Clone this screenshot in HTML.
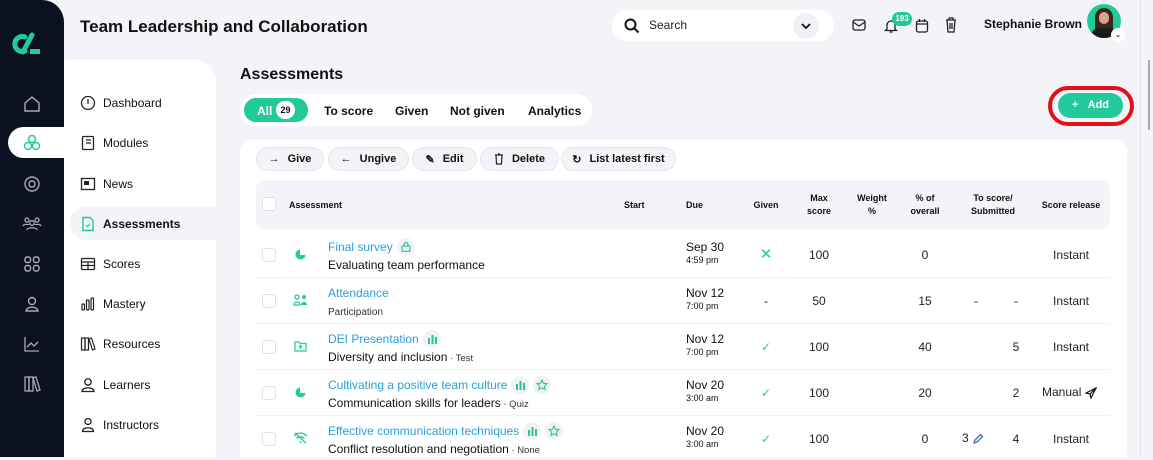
<!DOCTYPE html>
<html><head><meta charset="utf-8">
<style>
*{box-sizing:border-box;margin:0;padding:0}
body{width:1153px;height:457px;overflow:hidden;background:#f3f4f8;font-family:"Liberation Sans",sans-serif;color:#111;position:relative}
.a{position:absolute}
.side{left:0;top:0;width:64px;height:457px;background:#0b1120;border-top-right-radius:22px}
.sico{position:absolute;left:22px;width:20px;height:20px}
.nav{left:64px;top:60px;width:152px;height:397px;background:#fff;border-top-right-radius:22px}
.ni{position:absolute;left:16px;font-size:12px;font-weight:500;color:#111;display:flex;align-items:center;gap:7px;height:20px}
.ni svg{width:16px;height:16px}
.tabs{left:240px;top:94px;width:352px;height:32px;background:#fff;border-radius:16px}
.tab{position:absolute;top:10px;font-size:12px;font-weight:bold}
.panel{left:240px;top:140px;width:887px;height:317px;background:#fff;border-top-left-radius:12px;border-top-right-radius:12px}
.btn{position:absolute;top:147px;height:24px;border:1px solid #e3e5ec;background:#f3f4f8;border-radius:12px;font-size:11px;font-weight:bold;display:flex;align-items:center;justify-content:center;gap:8px}
.thead{left:256px;top:180px;width:854px;height:49px;background:#f3f4f8;border-radius:8px}
.th{position:absolute;font-size:9px;font-weight:bold;text-align:center;line-height:13px}
.cb{position:absolute;left:262px;width:14px;height:14px;border:1px solid #e0e2e8;border-radius:3px;background:#fff}
.row{position:absolute;left:256px;width:854px;height:1px;background:#eef0f4}
.t{position:absolute;font-size:12px;color:#222}
.tc{position:absolute;font-size:12px;color:#222;text-align:center;width:60px}
.lnk{color:#2a9fdd;font-size:12px}
.sub{font-size:12px;color:#111}
.sm{font-size:9.5px;color:#333}
.due{position:absolute;left:686px;font-size:12px;line-height:13px}
.due small{font-size:9px;display:block}
.pill{display:inline-block;width:18px;height:18px;border-radius:9px;background:#f0f2f5;vertical-align:middle;margin-left:4px;position:relative}
</style></head><body>
<div class="a side">
  <svg class="a" style="left:12px;top:32px" width="30" height="24" viewBox="0 0 30 24"><path d="M13 5 A7.5 7.5 0 1 0 13 19" stroke="#22c99a" stroke-width="5" fill="none" stroke-linecap="round"/><path d="M20 3 L11 20" stroke="#22c99a" stroke-width="5" stroke-linecap="round"/><rect x="18" y="17" width="10" height="5" fill="#22c99a"/></svg>
  <svg class="sico" style="top:94px" viewBox="0 0 20 20"><path d="M3 9 L10 3 L17 9 V17 H3Z" fill="none" stroke="#aab" stroke-width="1.4"/></svg>
  <div class="a" style="left:8px;top:127px;width:56px;height:31px;background:#fff;border-radius:16px 0 0 16px"></div>
  <svg class="sico" style="top:133px" viewBox="0 0 20 20"><g fill="none" stroke="#22c99a" stroke-width="1.4"><circle cx="10" cy="6" r="3.5"/><circle cx="6" cy="13" r="3.5"/><circle cx="14" cy="13" r="3.5"/></g></svg>
  <svg class="sico" style="top:174px" viewBox="0 0 20 20"><circle cx="10" cy="10" r="7" fill="none" stroke="#aab" stroke-width="1.4"/><circle cx="10" cy="10" r="3" fill="none" stroke="#aab" stroke-width="1.4"/></svg>
  <svg class="sico" style="top:214px" viewBox="0 0 20 20"><g fill="none" stroke="#aab" stroke-width="1.3"><circle cx="5" cy="6" r="2"/><circle cx="15" cy="6" r="2"/><circle cx="10" cy="9" r="2.3"/><path d="M5 16c0-3 10-3 10 0M1 12c0-2 6-2 6-1M19 12c0-2-6-2-6-1"/></g></svg>
  <svg class="sico" style="top:254px" viewBox="0 0 20 20"><g fill="none" stroke="#aab" stroke-width="1.4"><rect x="3" y="3" width="5.5" height="5.5" rx="2"/><rect x="11.5" y="3" width="5.5" height="5.5" rx="2"/><rect x="3" y="11.5" width="5.5" height="5.5" rx="2"/><rect x="11.5" y="11.5" width="5.5" height="5.5" rx="2"/></g></svg>
  <svg class="sico" style="top:294px" viewBox="0 0 20 20"><g fill="none" stroke="#aab" stroke-width="1.4"><circle cx="10" cy="7" r="3.5"/><path d="M4 17c0-5 12-5 12 0Z"/></g></svg>
  <svg class="sico" style="top:334px" viewBox="0 0 20 20"><path d="M3 3V17H17M5 13l4-4 3 3 4-4" fill="none" stroke="#aab" stroke-width="1.3"/></svg>
  <svg class="sico" style="top:374px" viewBox="0 0 20 20"><g fill="none" stroke="#aab" stroke-width="1.3"><rect x="3" y="3" width="4" height="14"/><rect x="7" y="3" width="4" height="14"/><path d="M11 4l3-1 4 13-3 1z"/></g></svg>
</div>
<div class="a" style="left:80px;top:17px;font-size:17px;font-weight:bold">Team Leadership and Collaboration</div>
<div class="a" style="left:612px;top:10px;width:222px;height:31px;background:#fff;border-radius:16px"></div>
<svg class="a" style="left:624px;top:18px" width="16" height="16" viewBox="0 0 16 16"><circle cx="6.5" cy="6.5" r="5" fill="none" stroke="#111" stroke-width="2"/><path d="M10 10l4.5 4.5" stroke="#111" stroke-width="2"/></svg>
<div class="a" style="left:649px;top:18px;font-size:12px;color:#222">Search</div>
<div class="a" style="left:793px;top:13px;width:26px;height:26px;border-radius:13px;background:#f0f1f5"></div>
<svg class="a" style="left:800px;top:20px" width="12" height="12" viewBox="0 0 12 12"><path d="M2 4l4 4 4-4" fill="none" stroke="#111" stroke-width="1.8"/></svg>
<svg class="a" style="left:852px;top:19px" width="14" height="12" viewBox="0 0 14 12"><rect x="1" y="1" width="12" height="10" rx="2" fill="none" stroke="#222" stroke-width="1.3"/><path d="M1 3l6 4 6-4" fill="none" stroke="#222" stroke-width="1.3"/></svg>
<svg class="a" style="left:884px;top:18px" width="14" height="16" viewBox="0 0 14 16"><path d="M3 11V7a4 4 0 018 0v4l1.5 1.5h-11zM5.5 14h3" fill="none" stroke="#222" stroke-width="1.3"/></svg>
<div class="a" style="left:892px;top:12px;width:20px;height:14px;border-radius:7px;background:#22c99a;color:#fff;font-size:8px;font-weight:bold;text-align:center;line-height:14px">193</div>
<svg class="a" style="left:915px;top:18px" width="14" height="15" viewBox="0 0 14 15"><rect x="1.5" y="3" width="11" height="11" rx="2" fill="none" stroke="#222" stroke-width="1.3"/><path d="M1.5 6h11M4.5 1v3M9.5 1v3" stroke="#222" stroke-width="1.3"/></svg>
<svg class="a" style="left:945px;top:17px" width="12" height="16" viewBox="0 0 12 16"><path d="M1 3h10M4 3V1h4v2M2 3l1 12h6l1-12M5 6v6M7 6v6" fill="none" stroke="#222" stroke-width="1.3"/></svg>
<div class="a" style="left:984px;top:17px;font-size:12px;font-weight:bold">Stephanie Brown</div>
<div class="a" style="left:1087px;top:4px;width:34px;height:34px;border-radius:17px;background:#22c99a;overflow:hidden"><div style="position:absolute;left:8px;top:4px;width:18px;height:30px;border-radius:9px 9px 2px 2px;background:#3a2520"></div><div style="position:absolute;left:12px;top:8px;width:10px;height:12px;border-radius:5px;background:#d9a58a"></div><div style="position:absolute;left:4px;top:24px;width:26px;height:14px;border-radius:8px 8px 0 0;background:#1a1a1a"></div></div>
<div class="a" style="left:1111px;top:28px;width:14px;height:14px;border-radius:7px;background:#fff;font-size:8px;text-align:center;line-height:13px">⌄</div>
<div class="a" style="left:1140px;top:0;width:13px;height:457px;background:#f3f4f8;border-left:1px solid #e3e4ea"></div>
<div class="a" style="left:1148px;top:60px;width:2px;height:70px;background:#aaa"></div>

<div class="a nav">
  <div class="ni" style="top:33px"><svg viewBox="0 0 16 16"><circle cx="8" cy="8" r="6.5" fill="none" stroke="#222" stroke-width="1.3"/><path d="M8 4v5" stroke="#222" stroke-width="1.3"/></svg>Dashboard</div>
  <div class="ni" style="top:73px"><svg viewBox="0 0 16 16"><rect x="2.5" y="1.5" width="11" height="13" rx="1" fill="none" stroke="#222" stroke-width="1.3"/><path d="M6 5h5M6 8h5" stroke="#222" stroke-width="1.2"/></svg>Modules</div>
  <div class="ni" style="top:114px"><svg viewBox="0 0 16 16"><rect x="1.5" y="2.5" width="13" height="11" fill="none" stroke="#222" stroke-width="1.3"/><rect x="4" y="5" width="5" height="4" fill="#222"/></svg>News</div>
  <div class="a" style="left:6px;top:147px;width:146px;height:33px;background:#f3f4f8;border-radius:16px 0 0 16px"></div>
  <div class="ni" style="top:154px;font-weight:bold"><svg viewBox="0 0 16 16"><path d="M3 1.5h7l3 3v10H3z" fill="none" stroke="#22c99a" stroke-width="1.4"/><path d="M6 9l1.5 1.5L10 8" fill="none" stroke="#22c99a" stroke-width="1.2"/></svg>Assessments</div>
  <div class="ni" style="top:194px"><svg viewBox="0 0 16 16"><rect x="1.5" y="2.5" width="13" height="11" rx="1" fill="none" stroke="#222" stroke-width="1.3"/><path d="M1.5 6h13M1.5 9.5h13M8 6v7.5" stroke="#222" stroke-width="1.2"/></svg>Scores</div>
  <div class="ni" style="top:234px"><svg viewBox="0 0 16 16"><g fill="none" stroke="#222" stroke-width="1.2"><rect x="2" y="8" width="2.5" height="6" rx="1"/><rect x="6.5" y="4" width="2.5" height="10" rx="1"/><rect x="11" y="2" width="2.5" height="12" rx="1"/></g></svg>Mastery</div>
  <div class="ni" style="top:274px"><svg viewBox="0 0 16 16"><g fill="none" stroke="#222" stroke-width="1.2"><rect x="1.5" y="2" width="3.5" height="12"/><rect x="5" y="2" width="3.5" height="12"/><path d="M9 3l2.5-1 3.5 11-2.5 1z"/></g></svg>Resources</div>
  <div class="ni" style="top:315px"><svg viewBox="0 0 16 16"><g fill="none" stroke="#222" stroke-width="1.3"><circle cx="8" cy="5" r="3.2"/><path d="M2 14.5c0-5 12-5 12 0z"/></g></svg>Learners</div>
  <div class="ni" style="top:355px"><svg viewBox="0 0 16 16"><g fill="none" stroke="#222" stroke-width="1.3"><circle cx="8" cy="4.5" r="3"/><path d="M2.5 14.5c0-5 11-5 11 0z"/></g></svg>Instructors</div>
</div>

<div class="a" style="left:240px;top:66px;font-size:16px;font-weight:bold">Assessments</div>
<div class="a tabs">
  <div class="a" style="left:4px;top:4px;width:64px;height:24px;background:#22c99a;border-radius:12px"></div>
  <div class="tab" style="left:17px;color:#fff">All</div>
  <div class="a" style="left:36px;top:7px;width:19px;height:18px;border-radius:9px;background:#fff;font-size:9px;font-weight:bold;text-align:center;line-height:18px">29</div>
  <div class="tab" style="left:84px">To score</div>
  <div class="tab" style="left:155px">Given</div>
  <div class="tab" style="left:210px">Not given</div>
  <div class="tab" style="left:288px">Analytics</div>
</div>
<div class="a" style="left:1048px;top:86px;width:86px;height:40px;border:4px solid #e4101a;border-radius:20px"></div>
<div class="a" style="left:1058px;top:93px;width:65px;height:25px;border-radius:13px;background:#22c99a;color:#fff;font-size:11px;font-weight:bold;text-align:center;line-height:25px">+&nbsp;&nbsp;&nbsp;Add</div>

<div class="a panel"></div>
<div class="btn" style="left:256px;width:68px">→ <span>Give</span></div>
<div class="btn" style="left:328px;width:81px">← <span>Ungive</span></div>
<div class="btn" style="left:412px;width:65px">✎ <span>Edit</span></div>
<div class="btn" style="left:480px;width:79px"><svg width="10" height="12" viewBox="0 0 10 12"><path d="M1 2h8M2 2l.5 9h5L8 2M4 1h2" fill="none" stroke="#222" stroke-width="1.2"/></svg><span>Delete</span></div>
<div class="btn" style="left:561px;width:115px">↻ <span>List latest first</span></div>

<div class="a thead"></div>
<div class="cb" style="top:197px"></div>
<div class="th" style="left:289px;top:199px">Assessment</div>
<div class="th" style="left:624px;top:199px">Start</div>
<div class="th" style="left:686px;top:199px">Due</div>
<div class="th" style="left:736px;top:199px;width:60px">Given</div>
<div class="th" style="left:789px;top:192px;width:60px">Max<br>score</div>
<div class="th" style="left:842px;top:192px;width:60px">Weight<br>%</div>
<div class="th" style="left:895px;top:192px;width:60px">% of<br>overall</div>
<div class="th" style="left:958px;top:192px;width:70px">To score/<br>Submitted</div>
<div class="th" style="left:1036px;top:199px;width:70px">Score release</div>

<div class="row" style="top:277px"></div><div class="row" style="top:323px"></div><div class="row" style="top:369px"></div><div class="row" style="top:415px"></div>

<div class="cb" style="top:248px"></div>
<svg class="a" style="left:294px;top:248px" width="13" height="13" viewBox="0 0 13 13"><path d="M6 1.5A5 5 0 1 0 11.5 7H6z" fill="#22c99a"/></svg>
<div class="a" style="left:328px;top:238px;line-height:18px"><span class="lnk">Final survey</span><span class="pill" style="background:#f2f3f6"><svg class="a" style="left:4px;top:3px" width="10" height="11" viewBox="0 0 10 11"><rect x="1" y="5" width="8" height="5.5" rx="1" fill="none" stroke="#22c99a" stroke-width="1.2"/><path d="M3 5V3.5a2 2 0 014 0V5" fill="none" stroke="#22c99a" stroke-width="1.2"/></svg></span><br><span class="sub">Evaluating team performance</span></div>
<div class="due" style="top:241px">Sep 30<small>4:59 pm</small></div>
<div class="tc" style="left:736px;top:245px;color:#22c99a;font-size:15px">✕</div>
<div class="tc" style="left:789px;top:248px">100</div>
<div class="tc" style="left:895px;top:248px">0</div>
<div class="tc" style="left:1041px;top:248px">Instant</div>

<div class="cb" style="top:294px"></div>
<svg class="a" style="left:293px;top:294px" width="15" height="12" viewBox="0 0 15 12"><g fill="none" stroke="#22c99a" stroke-width="1.3"><circle cx="4" cy="3" r="2"/><path d="M1 11c0-4 6-4 6 0z"/></g><circle cx="11" cy="3" r="2" fill="#22c99a"/><path d="M8 11c0-4 6-4 6 0z" fill="#22c99a"/></svg>
<div class="a" style="left:328px;top:284px;line-height:18px"><span class="lnk">Attendance</span><br><span class="sm" style="font-size:10px">Participation</span></div>
<div class="due" style="top:287px">Nov 12<small>7:00 pm</small></div>
<div class="tc" style="left:736px;top:294px">-</div>
<div class="tc" style="left:789px;top:294px">50</div>
<div class="tc" style="left:895px;top:294px">15</div>
<div class="tc" style="left:946px;top:294px">-</div>
<div class="tc" style="left:986px;top:294px">-</div>
<div class="tc" style="left:1041px;top:294px">Instant</div>

<div class="cb" style="top:340px"></div>
<svg class="a" style="left:294px;top:340px" width="13" height="12" viewBox="0 0 13 12"><path d="M1 2h4l1 1.5h6V11H1z M6.5 9V5.5M5 7l1.5-1.5L8 7" fill="none" stroke="#22c99a" stroke-width="1.2"/></svg>
<div class="a" style="left:328px;top:330px;line-height:18px"><span class="lnk">DEI Presentation</span><span class="pill"><svg class="a" style="left:5px;top:4px" width="9" height="10" viewBox="0 0 9 10"><rect x="0" y="4" width="2" height="6" fill="#22c99a"/><rect x="3.5" y="1" width="2" height="9" fill="#22c99a"/><rect x="7" y="3" width="2" height="7" fill="#22c99a"/></svg></span><br><span class="sub">Diversity and inclusion</span><span class="sm"> · Test</span></div>
<div class="due" style="top:333px">Nov 12<small>7:00 pm</small></div>
<div class="tc" style="left:736px;top:340px;color:#22c99a">✓</div>
<div class="tc" style="left:789px;top:340px">100</div>
<div class="tc" style="left:895px;top:340px">40</div>
<div class="tc" style="left:986px;top:340px">5</div>
<div class="tc" style="left:1041px;top:340px">Instant</div>

<div class="cb" style="top:386px"></div>
<svg class="a" style="left:294px;top:386px" width="13" height="13" viewBox="0 0 13 13"><path d="M6 1.5A5 5 0 1 0 11.5 7H6z" fill="#22c99a"/></svg>
<div class="a" style="left:328px;top:376px;line-height:18px"><span class="lnk">Cultivating a positive team culture</span><span class="pill"><svg class="a" style="left:5px;top:4px" width="9" height="10" viewBox="0 0 9 10"><rect x="0" y="4" width="2" height="6" fill="#22c99a"/><rect x="3.5" y="1" width="2" height="9" fill="#22c99a"/><rect x="7" y="3" width="2" height="7" fill="#22c99a"/></svg></span><span class="pill"><svg class="a" style="left:3px;top:3px" width="12" height="12" viewBox="0 0 12 12"><path d="M6 1l1.5 3.2 3.5.4-2.6 2.4.7 3.5L6 8.8 2.9 10.5l.7-3.5L1 4.6l3.5-.4z" fill="none" stroke="#22c99a" stroke-width="1.1"/></svg></span><br><span class="sub">Communication skills for leaders</span><span class="sm"> · Quiz</span></div>
<div class="due" style="top:379px">Nov 20<small>3:00 am</small></div>
<div class="tc" style="left:736px;top:386px;color:#22c99a">✓</div>
<div class="tc" style="left:789px;top:386px">100</div>
<div class="tc" style="left:895px;top:386px">20</div>
<div class="tc" style="left:986px;top:386px">2</div>
<div class="t" style="left:1042px;top:385px">Manual <svg width="12" height="12" viewBox="0 0 12 12" style="vertical-align:middle"><path d="M11 1L1 6l4 1 1 4z M5 7l6-6" fill="none" stroke="#111" stroke-width="1.2"/></svg></div>

<div class="cb" style="top:432px"></div>
<svg class="a" style="left:293px;top:432px" width="15" height="12" viewBox="0 0 15 12"><path d="M1 4c4-4 9-4 13 0M3.5 6.5c2.5-2.5 5.5-2.5 8 0M2 1l11 10" fill="none" stroke="#22c99a" stroke-width="1.3"/><circle cx="7.5" cy="10" r="1" fill="#22c99a"/></svg>
<div class="a" style="left:328px;top:422px;line-height:18px"><span class="lnk">Effective communication techniques</span><span class="pill"><svg class="a" style="left:5px;top:4px" width="9" height="10" viewBox="0 0 9 10"><rect x="0" y="4" width="2" height="6" fill="#22c99a"/><rect x="3.5" y="1" width="2" height="9" fill="#22c99a"/><rect x="7" y="3" width="2" height="7" fill="#22c99a"/></svg></span><span class="pill"><svg class="a" style="left:3px;top:3px" width="12" height="12" viewBox="0 0 12 12"><path d="M6 1l1.5 3.2 3.5.4-2.6 2.4.7 3.5L6 8.8 2.9 10.5l.7-3.5L1 4.6l3.5-.4z" fill="none" stroke="#22c99a" stroke-width="1.1"/></svg></span><br><span class="sub">Conflict resolution and negotiation</span><span class="sm"> · None</span></div>
<div class="due" style="top:425px">Nov 20<small>3:00 am</small></div>
<div class="tc" style="left:736px;top:432px;color:#22c99a">✓</div>
<div class="tc" style="left:789px;top:432px">100</div>
<div class="tc" style="left:895px;top:432px">0</div>
<div class="t" style="left:962px;top:431px">3 <svg width="12" height="12" viewBox="0 0 12 12" style="vertical-align:middle"><path d="M2 10l1-3 5.5-5.5 2 2L5 9z" fill="none" stroke="#3a6fc4" stroke-width="1.3"/></svg></div>
<div class="tc" style="left:986px;top:432px">4</div>
<div class="tc" style="left:1041px;top:432px">Instant</div>
</body></html>
